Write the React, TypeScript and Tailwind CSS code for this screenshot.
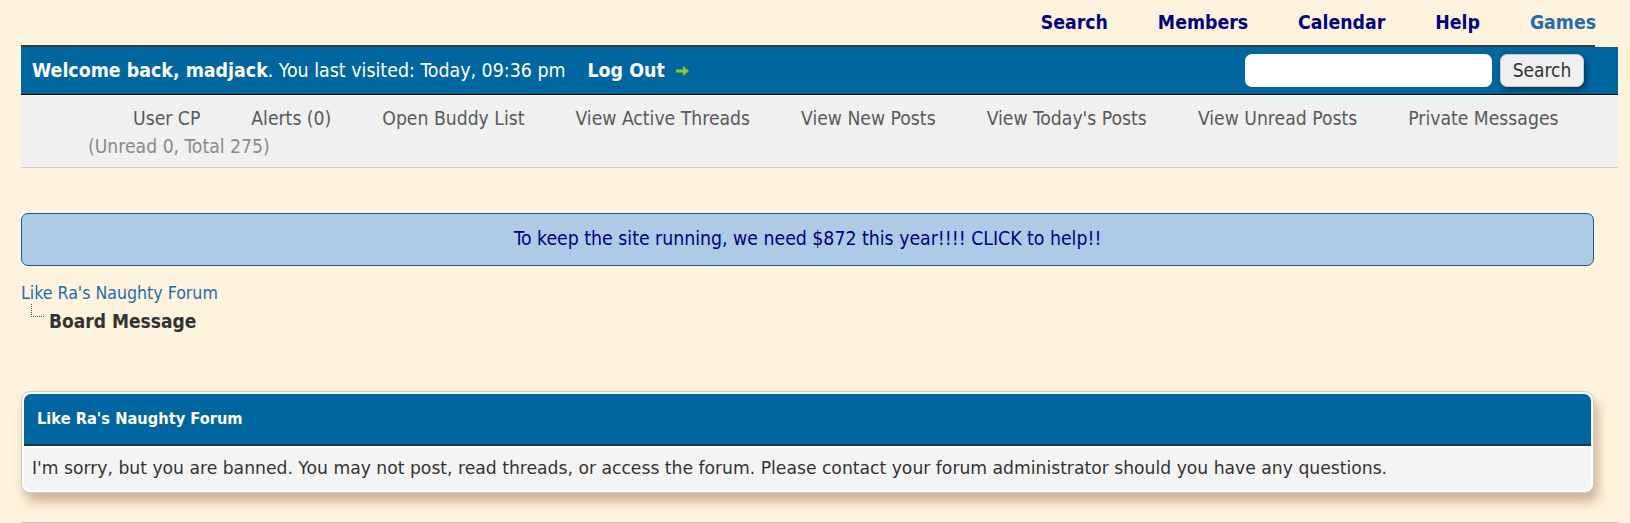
import React from "react";

const cond = "font-['DejaVu_Sans_Condensed','Liberation_Sans',sans-serif]";

function Arrow() {
  return (
    <svg width="15" height="12" viewBox="0 0 15 12" className="ml-[10px]">
      <path d="M1 4.5h7V1l6 5-6 5V7.5H1z" fill="#8dc63f" stroke="#5f9a2a" strokeWidth="0.6" />
    </svg>
  );
}

function Tree() {
  return (
    <svg width="16" height="15" viewBox="0 0 16 15" className="mr-[3px] mt-[-3px]">
      <path d="M1.5 0v12.5H15" fill="none" stroke="#555" strokeWidth="1" strokeDasharray="1 1" />
    </svg>
  );
}

export default function App() {
  const top = ["Search", "Members", "Calendar", "Help"];
  const sub = [
    "User CP",
    "Alerts (0)",
    "Open Buddy List",
    "View Active Threads",
    "View New Posts",
    "View Today's Posts",
    "View Unread Posts",
    "Private Messages",
  ];
  return (
    <div className={`min-h-[523px] bg-[#fef4dd] ${cond}`}>
      <div className="ml-[21px] mr-[12px]">
        <div className="h-[45px] flex items-center justify-end gap-[50px] pr-[22px] pt-[2px] text-[19.3px] font-bold">
          {top.map((t) => (
            <span key={t} className="text-[#000080]">{t}</span>
          ))}
          <span className="text-[#1f6db0]">Games</span>
        </div>
        <div className="h-[2px] bg-[#3a3a3a] mr-[23px]" />
        <div className="h-[48px] bg-[#0066a0] border-b border-black flex items-center pl-[11px] pr-[34px] text-white text-[19.4px]">
          <span className="font-bold">Welcome back, madjack</span>
          <span>. You last visited: Today, 09:36 pm</span>
          <span className="font-bold ml-[22px]">Log Out</span>
          <Arrow />
          <div className="ml-auto flex items-center gap-[8px]">
            <div className="w-[247px] h-[33px] bg-white rounded-[7px]" />
            <div className="w-[84px] h-[33px] bg-[#efefef] border border-[#c8c8c8] rounded-[7px] shadow-[2px_3px_6px_rgba(0,0,0,0.45)] flex items-center justify-center text-[#333] text-[19px]">
              Search
            </div>
          </div>
        </div>
        <div className="h-[73px] bg-[#f0f0f0] border-t border-white border-b border-b-[#cfcfcf] pt-[9px] text-[19.2px] leading-[28px]">
          <div className="flex gap-[51px] pl-[112px] text-[#5a5a5a]">
            {sub.map((s) => (
              <span key={s}>{s}</span>
            ))}
          </div>
          <div className="pl-[67px] text-[#8a8a8a]">(Unread 0, Total 275)</div>
        </div>
        <div className="mt-[45px] mr-[24px] h-[53px] bg-[#adcae6] border border-[#1e5a80] rounded-[7px] flex items-center justify-center text-[19.3px] text-[#000080]">
          To keep the site running, we need $872 this year!!!! CLICK to help!!
        </div>
        <div className="mt-[16px] text-[17.6px] leading-[22px] text-[#1f6db0]">Like Ra's Naughty Forum</div>
        <div className="flex items-start pl-[9px] mt-[3px]">
          <Tree />
          <span className="text-[19px] leading-[24px] font-bold text-[#333] mt-[2px]">Board Message</span>
        </div>
        <div className="mt-[58px] mr-[24px] bg-white border border-[#cccccc] rounded-[9px] p-[2px] shadow-[4px_9px_12px_rgba(165,110,75,0.5)]">
          <div className="h-[52px] bg-[#0066a0] rounded-t-[7px] border-b-2 border-[#1d3b40] flex items-center pl-[13px] text-white font-bold text-[16.3px]">
            Like Ra's Naughty Forum
          </div>
          <div className="mt-[2px] h-[42px] bg-[#f4f4f4] rounded-b-[7px] flex items-center pl-[8px] text-[#333] text-[17.2px] font-['DejaVu_Sans',sans-serif]">
            I'm sorry, but you are banned. You may not post, read threads, or access the forum. Please contact your forum administrator should you have any questions.
          </div>
        </div>
        <div className="mt-[29px] h-[2px] bg-[#c4c4c4]" />
      </div>
    </div>
  );
}
